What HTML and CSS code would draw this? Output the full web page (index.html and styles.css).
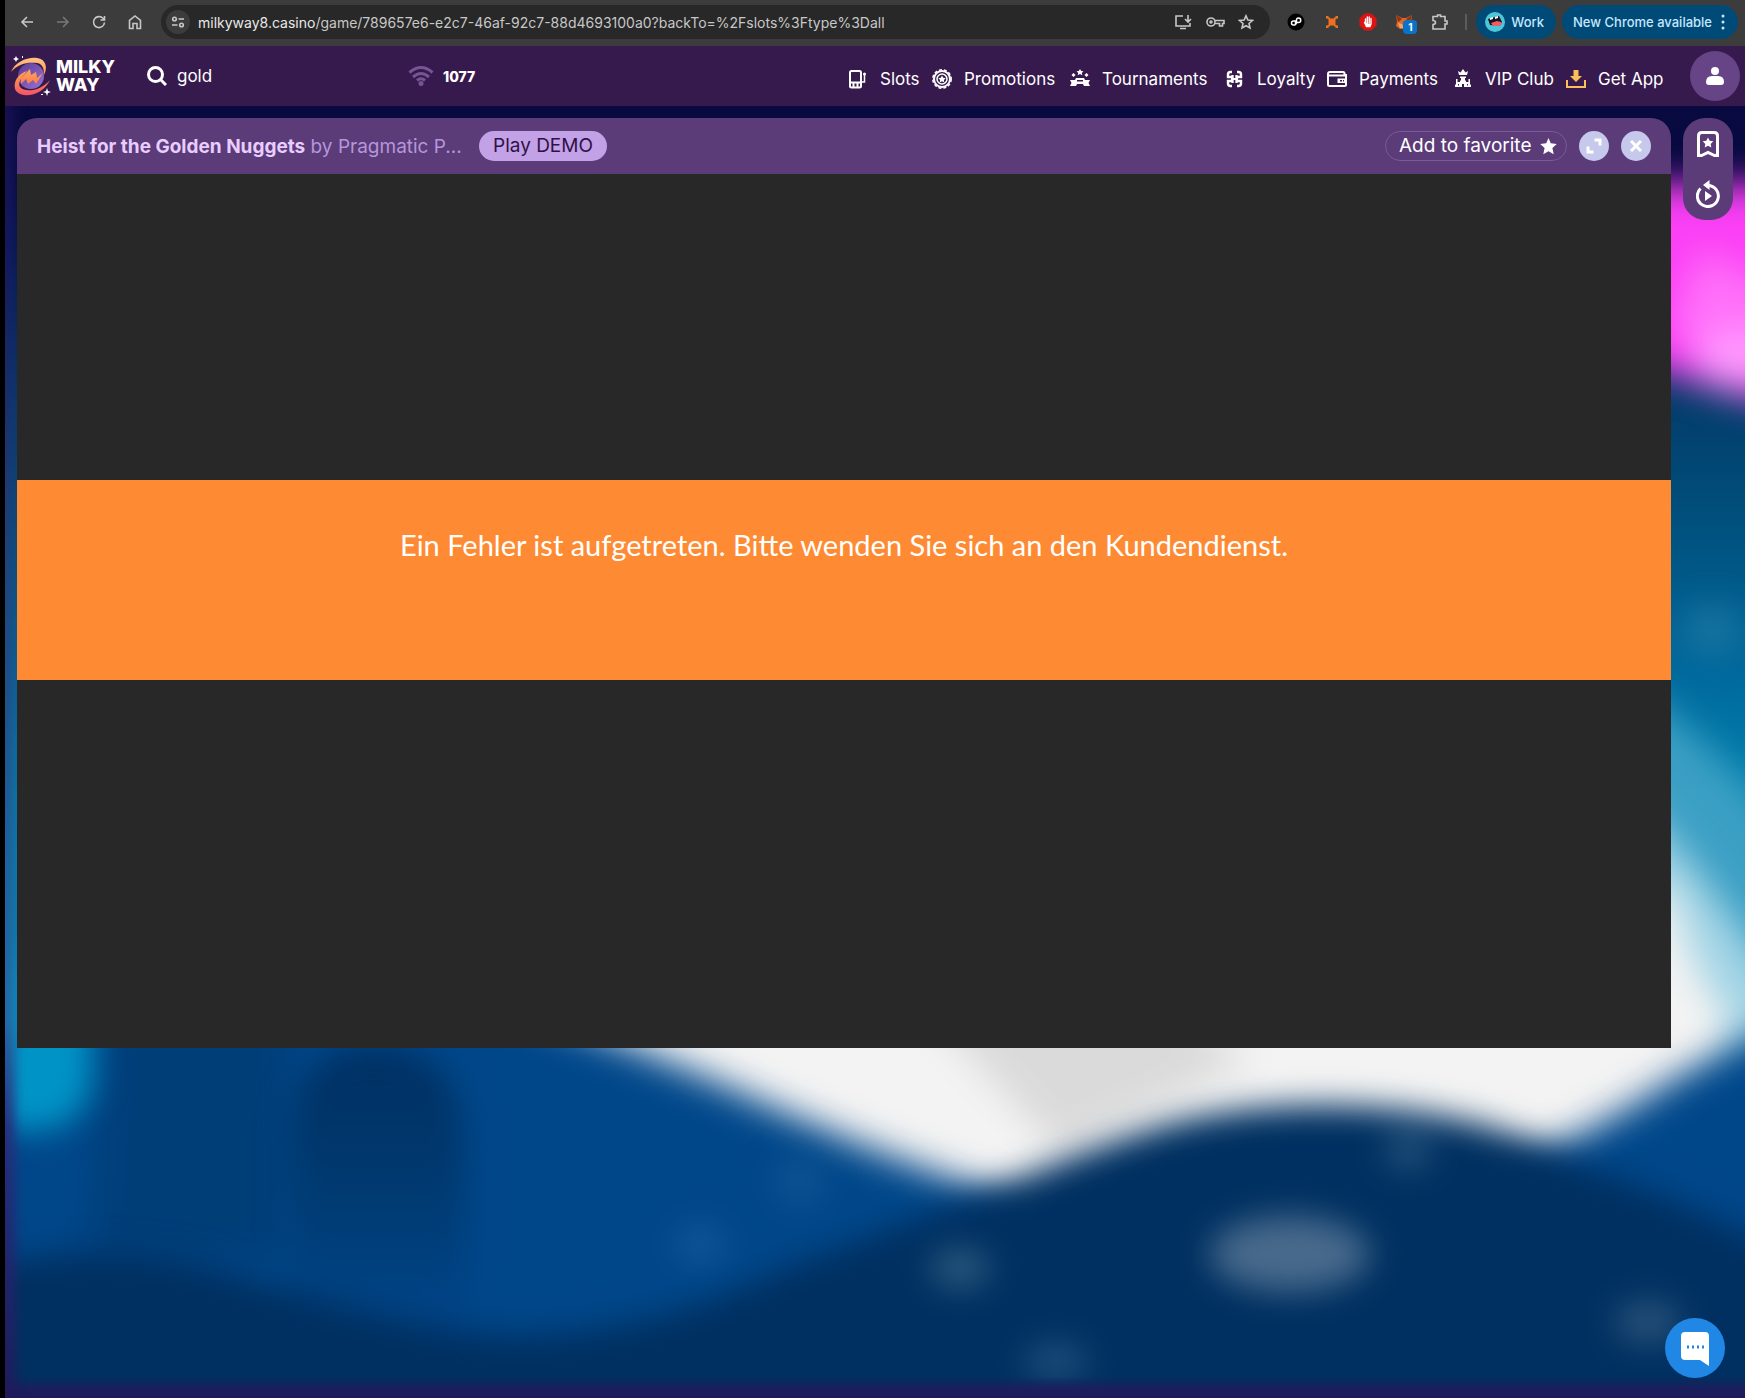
FILE: index.html
```
<!DOCTYPE html>
<html lang="en">
<head>
    <meta charset="UTF-8">
    <meta name="viewport" content="width=device-width, initial-scale=1.0">
    <title>Heist for the Golden Nuggets - Milky Way</title>
    <link rel="stylesheet" href="styles.css">
</head>
<body>
    <div class="browser">
        <button class="tool" aria-label="Back"><svg width="16" height="16" viewBox="0 0 16 16"><path d="M14 8H3M8 3L3 8l5 5"/></svg></button>
        <button class="tool off" aria-label="Forward"><svg width="16" height="16" viewBox="0 0 16 16"><path d="M2 8h11M8 3l5 5-5 5"/></svg></button>
        <button class="tool" aria-label="Reload"><svg width="16" height="16" viewBox="0 0 16 16"><path d="M13.500 8.500A5.500 5.500 0 1 1 12 4.300L13.300 5.500M13.500 2v4h-4"/></svg></button>
        <button class="tool" aria-label="Home"><svg width="16" height="16" viewBox="0 0 16 16"><path d="M2.500 14.500V6.500L8 2l5.500 4.500v8H10V9.500H6v5z"/></svg></button>
        <div class="address">
            <button class="site" aria-label="Site settings"><svg width="14" height="14" viewBox="0 0 14 14"><circle cx="3.500" cy="4" r="1.800"/><path d="M7.500 4H13M1 10h5.500"/><circle cx="10.500" cy="10" r="1.800"/></svg></button>
            <span class="url"><b>milkyway8.casino</b>/game/789657e6-e2c7-46af-92c7-88d4693100a0?backTo=%2Fslots%3Ftype%3Dall</span>
            <button class="tool" aria-label="Install"><svg width="18" height="16" viewBox="0 0 18 16"><path d="M9 2H2v10h14V9M6 14.500h6M14 1v6M11 5l3 3 3-3"/></svg></button>
            <button class="tool" aria-label="Passwords"><svg width="19" height="16" viewBox="0 0 19 16"><circle cx="5" cy="8" r="4"/><circle cx="5" cy="8" r="1"/><path d="M9 6.500h9v3h-1.500V12h-3V9.500H9"/></svg></button>
            <button class="tool" aria-label="Bookmark"><svg width="16" height="16" viewBox="0 0 16 16"><path d="M8 1.800l1.900 4.200 4.500.5-3.400 3 1 4.500L8 11.700 4 14l1-4.500-3.400-3 4.500-.5z"/></svg></button>
        </div>
        <div class="extensions">
            <svg width="18" height="18" viewBox="0 0 18 18"><circle cx="9" cy="9" r="8.500" fill="#000"/><path d="M8.500 12H6.500a2 2 0 0 1 0-4H8.500V11q0 1 1-1V7q0-2 2-2a2 2 0 0 1 0 4.500H10" fill="none" stroke="#fff" stroke-width="1.500"/></svg>
            <svg width="18" height="18" viewBox="0 0 18 18" fill="#f0701e"><path d="M5.500 5.500h7v7h-7z"/><path d="M3 3h2.500v1.500H7V6H4.500V5.500H3zM15 3h-2.500v1.500H11V6h2.500v-.5H15zM3 15h2.500v-1.500H7V12H4.500v.5H3zM15 15h-2.500v-1.500H11V12h2.500v.5H15z"/></svg>
            <svg width="18" height="18" viewBox="0 0 18 18"><path d="M5.500.5h7l5 5v7l-5 5h-7l-5-5v-7z" fill="#e01212"/><path d="M6.500 6v5M8.300 4v6M10.200 4v6M12 5.500V11M5.500 9.500l2 4h3.500l1-2.500" stroke="#fff" stroke-width="1.400" fill="#fff" stroke-linecap="round"/></svg>
            <span class="fox">
                <svg width="18" height="18" viewBox="0 0 18 18"><path d="M1 2l6 3h4l6-3-1 7 1 4-4 3H5l-4-3 1-4z" fill="#e0662a"/><path d="M1 2l6 4-4 3zM17 2l-6 4 4 3z" fill="#8d3410"/><path d="M3 10l4 1 2 4 2-4 4-1-2 5H5z" fill="#f3a36b"/></svg>
                <span class="count">1</span>
            </span>
            <svg class="puzzle" width="18" height="18" viewBox="0 0 18 18"><path d="M2 3.500h4.500V2h3v1.500H14V8h2v3h-2v5H2v-4.500q2.500-.2 2.500-2T2 7.500z"/></svg>
        </div>
        <span class="divider"></span>
        <button class="pill work">
            <svg width="20" height="20" viewBox="0 0 20 20"><circle cx="10" cy="10" r="10" fill="#4cc7d9"/><path d="M3 7l11-3 3 6-3 4-9-1z" fill="#1b1420"/><path d="M5 6l3-1v2l-3 1zM10 5l3-1v2l-3 1z" fill="#fff"/><path d="M6 11l6-2 4 1 1 2-3 2-6 0z" fill="#ef5b68"/></svg>
            Work
        </button>
        <button class="pill">New Chrome available <svg width="4" height="16" viewBox="0 0 4 16" fill="#c6e7ff"><circle cx="2" cy="2" r="1.500"/><circle cx="2" cy="8" r="1.500"/><circle cx="2" cy="14" r="1.500"/></svg></button>
    </div>

    <div class="page">
        <svg class="scene" viewBox="5 46 1740 1352" preserveAspectRatio="none" aria-hidden="true">
            <defs>
                <linearGradient id="sky" x1="0" y1="0" x2="0" y2="1">
                    <stop offset="0" stop-color="#0b0940"/>
                    <stop offset=".1" stop-color="#050a40"/>
                    <stop offset=".26" stop-color="#033c6a"/>
                    <stop offset=".36" stop-color="#00527f"/>
                    <stop offset=".46" stop-color="#00689c"/>
                    <stop offset=".55" stop-color="#0080ac"/>
                    <stop offset="1" stop-color="#0094c6"/>
                </linearGradient>
                <linearGradient id="edge" x1="0" y1="0" x2="0" y2="1">
                    <stop offset="0" stop-color="#1b0b4a"/>
                    <stop offset=".15" stop-color="#13195f"/>
                    <stop offset=".35" stop-color="#1e3f75"/>
                    <stop offset=".6" stop-color="#205f9b"/>
                    <stop offset=".72" stop-color="#2468a4"/>
                    <stop offset=".8" stop-color="#24307e"/>
                    <stop offset="1" stop-color="#21195a"/>
                </linearGradient>
                <linearGradient id="floor" x1="0" y1="0" x2="0" y2="1">
                    <stop offset="0" stop-color="#1a1c5c" stop-opacity="0"/>
                    <stop offset=".6" stop-color="#1b1f5c"/>
                    <stop offset="1" stop-color="#1c1b5c"/>
                </linearGradient>
                <linearGradient id="door" x1="0" y1="0" x2="0" y2="1">
                    <stop offset="0" stop-color="#003062"/>
                    <stop offset=".5" stop-color="#003a70"/>
                    <stop offset="1" stop-color="#00458a"/>
                </linearGradient>
                <filter id="soft" x="-50%" y="-50%" width="200%" height="200%" color-interpolation-filters="sRGB"><feGaussianBlur stdDeviation="18"/></filter>
                <filter id="softer" x="-50%" y="-50%" width="200%" height="200%" color-interpolation-filters="sRGB"><feGaussianBlur stdDeviation="16"/></filter>
                <filter id="haze" x="-200%" width="500%" color-interpolation-filters="sRGB"><feGaussianBlur stdDeviation="6 0"/></filter>
            </defs>
            <rect x="5" y="46" width="1740" height="1352" fill="url(#sky)"/>
            <g filter="url(#soft)">
                <path d="M1560 184h300v222q-80 5-150-20-60-20-150-45z" fill="#fb3ff5"/>
                <path d="M1700 250q50 20 120 70v60h-110l-40-60z" fill="#ff70f9"/>
                <ellipse cx="1738" cy="358" rx="44" ry="30" fill="#ff9aff"/>
                <path d="M1560 640q110 60 200 160l60 100v320h-260z" fill="#3b9fc4"/>
                <path d="M1600 770q90 70 200 250v180h-260z" fill="#a2d4e5"/>
                <path d="M400 900H1640l30-20q20 90 60 140l-10 40-40 180H400z" fill="#f3f3f3"/>
                <path d="M960 1000h200l90 60-190 90q-60-60-140-150z" fill="#dadada"/>
                <ellipse cx="1712" cy="630" rx="28" ry="20" fill="#1f7aa5"/>
            </g>
            <g filter="url(#soft)">
                <path d="M-60 1000H500q110 35 240 92 130 60 280 110 50 200 0 280H-60z" fill="#00478a"/>
                <path d="M1500 1170q90-35 180-95 60-30 160-80v500h-340z" fill="#00478a"/>
                <path d="M110 1000h180v260H90z" fill="#003e78"/>
            </g>
            <g filter="url(#softer)">
                <path d="M290 1150q-2-105 85-105t90 105v180H290z" fill="url(#door)"/>
                <path d="M-20 960H92v130q-20 40-50 40h-62z" fill="#0094c6"/>
                <path d="M-60 1280q150-50 280-10 190 60 290 66 140 0 280-70 110-40 215-82 95-40 170-62 95-23 200-15 115 8 200 55 150 55 300 135v300H-60z" fill="#003061"/>
                <ellipse cx="1290" cy="1254" rx="80" ry="38" fill="#486a8c"/>
                <ellipse cx="960" cy="1268" rx="30" ry="20" fill="#2a587e"/>
                <ellipse cx="1408" cy="1150" rx="24" ry="20" fill="#22507a"/>
                <ellipse cx="1648" cy="1322" rx="34" ry="22" fill="#265078"/>
                <ellipse cx="1056" cy="1362" rx="32" ry="20" fill="#1c4c78"/>
                <ellipse cx="700" cy="1244" rx="24" ry="18" fill="#125798"/>
                <ellipse cx="800" cy="1180" rx="22" ry="24" fill="#0f5594"/>
            </g>
            <rect x="5" y="1376" width="1740" height="22" fill="url(#floor)"/>
            <rect x="-10" y="46" width="25" height="1352" fill="url(#edge)" filter="url(#haze)"/>
        </svg>

        <header class="header">
            <a class="logo" href="#" aria-label="Milky Way">
                <svg width="40" height="40" viewBox="0 0 40 40">
                    <defs>
                        <linearGradient id="flame" gradientUnits="userSpaceOnUse" x1="0" y1="0" x2="0" y2="40"><stop offset="0" stop-color="#ffc88a"/><stop offset=".5" stop-color="#ff9450"/><stop offset="1" stop-color="#f4506a"/></linearGradient>
                        <linearGradient id="planet" x1="0" y1="0" x2="1" y2="1"><stop offset="0" stop-color="#5a3a94"/><stop offset="1" stop-color="#9a73d2"/></linearGradient>
                    </defs>
                    <circle cx="20" cy="20" r="13" fill="url(#planet)"/>
                    <path d="M0 16C4 6 16 1 26 2c9 1 11 10 7 17 0-6-1-11-7-12C17 6 8 7 0 16z" fill="url(#flame)"/>
                    <path d="M10 22l9-9 1 6 5-3 1 6 6-5-7 11-3-4-5 4-2-5-5 5z" fill="url(#flame)"/>
                    <path d="M16 15c-4 5-10 11-7 16 5 6 21 4 30-7-6 14-26 20-34 11C1 28 6 18 16 15z" fill="url(#flame)"/>
                    <path d="M5 0l1 2 2 1-2 1-1 2-1-2-2-1 2-1zM36 32l1 3 3 1-3 1-1 3-1-3-3-1 3-1zM11 0h1v2h-1zM30 38h2v1h-2z" fill="#fff"/>
                </svg>
                <span>MILKY<br>WAY</span>
            </a>
            <form class="search">
                <label for="search"><svg width="20" height="20" viewBox="0 0 20 20"><circle cx="8.500" cy="8.500" r="7"/><path d="M13.500 13.500L19 19"/></svg></label>
                <input id="search" type="text" value="gold" aria-label="Search">
            </form>
            <div class="signal">
                <svg width="26" height="22" viewBox="0 0 26 22"><path d="M1.500 7.500q11.500-10 23 0M5 12q8-7 16 0M9 15.500q4-3.500 8 0"/><circle cx="13" cy="18.500" r="2.500"/></svg>
                1077
            </div>
            <nav class="menu">
                <a href="#"><svg width="20" height="20" viewBox="0 0 20 20"><path d="M3.500 2h8q1.500 0 1.500 1.500V17q0 1.500-1.500 1.500h-8Q2 18.500 2 17V3.500Q2 2 3.500 2zM2 13.500h11M5.500 14v4M9.500 14v4" fill="none" stroke="#fff" stroke-width="2"/><path d="M13.500 13h3V5" fill="none" stroke="#fff" stroke-width="1.500"/><circle cx="16.500" cy="5" r="1.500"/></svg>Slots</a>
                <a href="#"><svg width="20" height="20" viewBox="0 0 20 20"><circle cx="10" cy="10" r="8" fill="none" stroke="#fff" stroke-width="2"/><circle cx="10" cy="10" r="9.200" fill="none" stroke="#fff" stroke-width="1.500" stroke-dasharray="3 2"/><circle cx="10" cy="10" r="5" fill="none" stroke="#fff" stroke-width="1.500"/><path d="M10 6.500l1.200 2.300 2.500.4-1.800 1.800.4 2.500-2.300-1.200-2.300 1.200.4-2.500-1.800-1.800 2.500-.4z"/></svg>Promotions</a>
                <a href="#"><svg width="20" height="20" viewBox="0 0 20 20"><path d="M10 0l1.200 2 2.300.3-1.700 1.600.5 2.300L10 5.100 7.700 6.200l.5-2.300-1.700-1.600L8.800 2zM3.500 4l2 2-2 2-2-2zM16.500 4l2 2-2 2-2-2zM6 9h8l1 2h5l-1.500 3L20 17h-6l-1-2H7l-1 2H0l1.500-3L0 11h5z"/><path d="M7 11h6v1.500H7z" fill="#371a4d"/></svg>Tournaments</a>
                <a href="#"><svg width="20" height="20" viewBox="0 0 20 20"><path d="M7 3H5.500Q3 3 3 5.500V8h4.500V6M12 3h1.500Q16 3 16 5.500V8h-4.500V6M7 17H5.500Q3 17 3 14.500V12h4.500v2M12 17h1.500q2.500 0 2.500-2.500V12h-4.500v2" fill="none" stroke="#fff" stroke-width="2.400"/><path d="M6 9h7v2H6z"/></svg>Loyalty</a>
                <a href="#"><svg width="20" height="20" viewBox="0 0 20 20"><path d="M3 3h13q1.500 0 1.500 1.500V6H19v9.500q0 1.500-1.500 1.500h-15Q1 17 1 15.500V5q0-2 2-2z" fill="none" stroke="#fff" stroke-width="2"/><path d="M2 5.500h16v2H2zM10.500 9.500H19v4.500h-8.500z"/><path d="M13 11h2v1.500h-2zM16 11h1v1.500h-1z" fill="#371a4d"/></svg>Payments</a>
                <a href="#"><svg width="20" height="20" viewBox="0 0 20 20"><path d="M5 2l2.500 1.500L10 0l2.500 3.500L15 2l-1 4H6zM7 7.500h6V9H7zM8 9h4v4H8zM3 10h1.500v3H7v-1.500h6V13h2.500v-3H17v5.500h1V18H2v-2.500h1z"/><path d="M9 15h2v3H9zM5 15h1v1.500H5zM14 15h1v1.500h-1z" fill="#371a4d"/></svg>VIP Club</a>
                <a href="#"><svg width="20" height="20" viewBox="0 0 20 20"><path d="M7.500 1h5v6H16l-6 6-6-6h3.500z"/><path d="M0 11h2v6h16v-6h2v8H0z"/></svg>Get App</a>
            </nav>
            <button class="avatar" aria-label="Account"><svg width="20" height="20" viewBox="0 0 20 20" fill="#fff"><circle cx="10" cy="5" r="4"/><path d="M1 16q0-6 6-6h6q6 0 6 6 0 3-3 3H4q-3 0-3-3z"/></svg></button>
        </header>

        <main class="content">
            <section class="game">
                <div class="game-bar">
                    <h1 class="game-title"><strong>Heist for the Golden Nuggets</strong> by Pragmatic P...</h1>
                    <button class="demo">Play DEMO</button>
                    <button class="favorite">Add to favorite <svg width="17" height="17" viewBox="0 0 17 17" fill="#fff"><path d="M8.500 0l2.300 5.300 6 .7-4.400 4 1.300 6.300-5.200-3-5.200 3 1.300-6.300L.2 6l6-.7z"/></svg></button>
                    <button class="round" aria-label="Full screen"><svg width="16" height="16" viewBox="0 0 16 16"><path d="M8.500 2H14v5.500M7.500 14H2V8.500"/></svg></button>
                    <button class="round" aria-label="Close"><svg width="12" height="12" viewBox="0 0 12 12"><path d="M1 1l10 10M11 1L1 11"/></svg></button>
                </div>
                <div class="stage">
                    <p class="error" lang="de">Ein Fehler ist aufgetreten. Bitte wenden Sie sich an den Kundendienst.</p>
                </div>
            </section>
            <aside class="shortcuts">
                <button aria-label="Favorites"><svg width="22" height="26" viewBox="0 0 22 26"><path d="M5 1.500h12q3.500 0 3.500 3.500v19.500h-3L11 21.500l-6.500 3h-3V5Q1.500 1.500 5 1.500z"/><path class="fill" d="M11 6.500l1.700 3.300 3.600.5-2.600 2.600.6 3.600-3.300-1.700-3.300 1.700.6-3.600L5.700 10.300l3.600-.5z"/></svg></button>
                <button aria-label="Recent games"><svg width="24" height="28" viewBox="0 0 24 28"><path d="M12 5.500a10.500 10.500 0 1 1-7.500 3"/><path class="fill" d="M13.500 0v10L7 5zM9 11l7 5-7 5z"/></svg></button>
            </aside>
        </main>

        <button class="chat" aria-label="Chat"><svg width="32" height="36" viewBox="0 0 32 36"><path d="M6 2h20q4 0 4 4v30l-9-6H6q-4 0-4-4V6q0-4 4-4z" fill="#fff"/><path d="M8 17h2M13 17h2M18 17h2M23 17h2" stroke="#2087e5" stroke-width="3"/></svg></button>
    </div>
</body>
</html>
```

FILE: styles.css
```
* {
    box-sizing: border-box;
}
body {
    margin: 0;
    min-height: 100vh;
    display: flex;
    flex-direction: column;
    padding-left: 5px;
    background-color: #000;
    font-family: Inter, "Liberation Sans", sans-serif;
    color: white;
}
button {
    border: none;
    padding: 0;
    background: none;
    color: inherit;
    font-family: inherit;
    cursor: pointer;
}
svg {
    display: block;
    flex-shrink: 0;
}
a {
    color: inherit;
    text-decoration: none;
}

/* browser bar */
.browser {
    display: flex;
    align-items: center;
    height: 46px;
    padding: 0 7px 2px 14px;
    background-color: #3c3c3c;
    font-size: 13px;
}
.tool {
    width: 16px;
    margin-right: 20px;
}
.tool svg, .site svg, .puzzle {
    fill: none;
    stroke: #c7c7c7;
    stroke-width: 1.6;
}
.tool.off svg {
    stroke: #777;
}
.address {
    flex: 1;
    display: flex;
    align-items: center;
    gap: 14px;
    height: 34px;
    margin-left: -2px;
    padding: 0 14px 0 5px;
    border-radius: 17px;
    background-color: #282828;
}
.address .tool {
    width: 18px;
    margin: 0;
}
.site {
    display: flex;
    align-items: center;
    justify-content: center;
    width: 24px;
    height: 24px;
    border-radius: 50%;
    background-color: #3c3c3c;
}
.url {
    flex: 1;
    margin-left: -6px;
    font-size: 14px;
    color: #c7c7c7;
    white-space: nowrap;
}
.url b {
    font-weight: normal;
    color: #e8e8e8;
}
.extensions {
    display: flex;
    gap: 18px;
    margin-left: 17px;
}
.fox {
    position: relative;
}
.count {
    position: absolute;
    left: 8px;
    top: 7px;
    width: 14px;
    height: 14px;
    border-radius: 4px;
    background-color: #0b72c9;
    font-size: 10px;
    line-height: 14px;
    font-weight: bold;
    text-align: center;
}
.divider {
    width: 2px;
    height: 16px;
    margin: 0 9px 0 16px;
    background-color: #5c5c5c;
}
.pill {
    display: flex;
    align-items: center;
    gap: 11px;
    height: 34px;
    padding: 0 13px 0 11px;
    border-radius: 17px;
    background-color: #004a77;
    color: #c6e7ff;
    font-size: 13px;
    font-weight: 500;
}
.pill:last-child {
    gap: 9px;
}
.work {
    gap: 6px;
    padding: 0 12px 0 9px;
    margin-right: 6px;
}

/* page */
.page {
    flex: 1;
    position: relative;
    isolation: isolate;
    overflow: hidden;
}
.scene {
    position: absolute;
    z-index: -1;
    width: 100%;
    height: 100%;
}
.header {
    display: flex;
    align-items: center;
    height: 60px;
    padding: 0 5px 0 6px;
    background-color: #371a4d;
}
.logo {
    display: flex;
    align-items: center;
    gap: 5px;
    width: 136px;
    font-size: 18px;
    line-height: 18px;
    font-weight: 800;
}
.search {
    display: flex;
    align-items: center;
    gap: 10px;
    width: 261px;
}
.search svg {
    fill: none;
    stroke: #fff;
    stroke-width: 3;
}
.search input {
    width: 180px;
    border: none;
    outline: none;
    padding: 0;
    background: none;
    color: white;
    font-family: inherit;
    font-size: 17px;
}
.signal {
    display: flex;
    align-items: center;
    gap: 9px;
    font-size: 14px;
    font-weight: 800;
}
.signal svg {
    fill: none;
    stroke: #755592;
    stroke-width: 3;
}
.signal circle {
    fill: #755592;
    stroke: none;
}
.menu {
    display: grid;
    grid-template-columns: 84px 138px 155px 102px 126px 113px 98px;
    margin: 5px 26px 0 auto;
    font-size: 17px;
}
.menu a {
    display: flex;
    align-items: center;
    gap: 12px;
    white-space: nowrap;
}
.menu svg {
    fill: #fff;
}
.menu a:last-child svg {
    fill: #fbbe58;
}
.avatar {
    display: flex;
    align-items: center;
    justify-content: center;
    width: 50px;
    height: 50px;
    border-radius: 50%;
    background-color: #664485;
}
.content {
    display: flex;
    align-items: flex-start;
    gap: 12px;
    padding: 12px 12px 0;
}
.game {
    flex: 1;
    border-radius: 20px 20px 0 0;
    overflow: hidden;
}
.game-bar {
    display: flex;
    align-items: center;
    gap: 12px;
    height: 56px;
    padding: 0 20px;
    background-color: #5b3b78;
}
.game-title {
    width: 430px;
    margin: 0;
    font-size: 19px;
    font-weight: normal;
    color: #b596db;
    white-space: nowrap;
}
.game-title strong {
    color: #e8cdff;
}
.demo, .favorite {
    height: 30px;
    border-radius: 15px;
    font-size: 19px;
    line-height: 26px;
}
.demo {
    width: 128px;
    background-color: #c2a1e6;
    color: #2f1146;
}
.favorite {
    display: flex;
    align-items: center;
    justify-content: space-between;
    width: 182px;
    margin-left: auto;
    padding: 0 9px 0 13px;
    border: 1px solid #7a5a98;
}
.round {
    display: flex;
    align-items: center;
    justify-content: center;
    width: 30px;
    height: 30px;
    border-radius: 50%;
    background-color: #c6c8ec;
}
.round svg {
    fill: none;
    stroke: #fff;
    stroke-width: 3;
}
.stage {
    display: grid;
    grid-template-rows: 35fr 200px 42fr;
    height: calc(100vh - 524px);
    background-color: #282828;
}
.error {
    grid-row: 2;
    margin: 0;
    padding-top: 45px;
    background-color: #fe8b33;
    font-family: Lato, "Liberation Sans", sans-serif;
    font-size: 29px;
    line-height: 40px;
    text-align: center;
}
.shortcuts {
    display: flex;
    flex-direction: column;
    align-items: center;
    gap: 23px;
    width: 50px;
    padding: 13px 0 12px;
    border-radius: 22px;
    background-color: #5b3b78;
}
.shortcuts svg {
    fill: none;
    stroke: #fff;
    stroke-width: 3;
}
.shortcuts .fill {
    fill: #fff;
    stroke: none;
}
.chat {
    position: absolute;
    right: 20px;
    bottom: 20px;
    display: flex;
    align-items: center;
    justify-content: center;
    width: 60px;
    height: 60px;
    border-radius: 50%;
    background-color: #2087e5;
}
```
